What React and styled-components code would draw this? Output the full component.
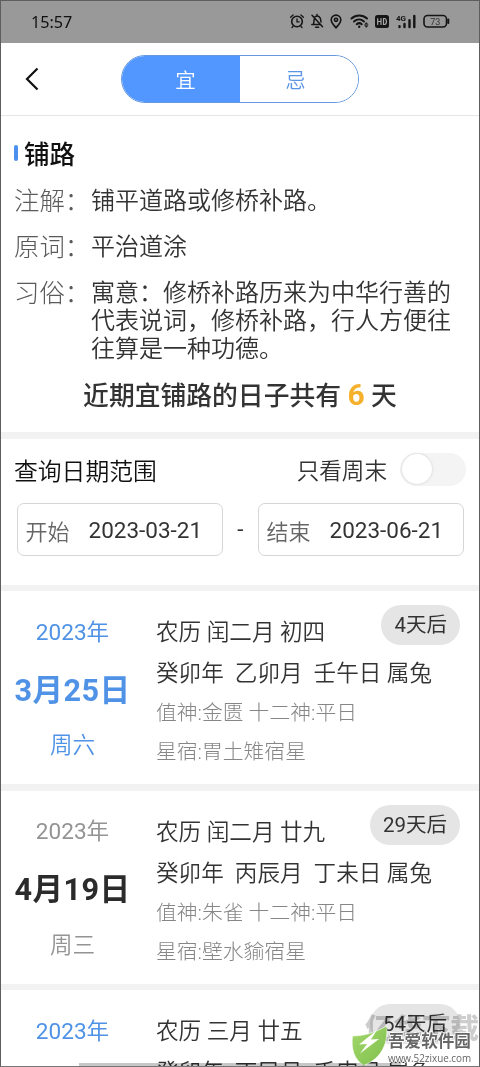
import React from 'react';
import styled, { createGlobalStyle } from 'styled-components';

const GlobalStyle = createGlobalStyle`
* { box-sizing: border-box; }
body {
    margin: 0;
    background: #fff;
    font-family: Roboto, "Noto Sans CJK SC", sans-serif;
    color: #333;
}
`;

const Phone = styled.div`
    position: relative;
    width: 480px;
    height: 1067px;
    overflow: hidden;
    border: 1px solid #5e5e5e;
    border-bottom-color: #777;
    background: #fff;
`;

const StatusBar = styled.div`
    display: flex;
    align-items: center;
    justify-content: space-between;
    height: 41.5px;
    padding: 0 28px 0 30px;
    background: #999;
    color: #111;
`;

const Clock = styled.span`
    font: 16.2px/38px "Noto Sans", sans-serif;
`;

const StatusIcons = styled.svg`
    width: 162px;
    height: 20px;
    display: block;
    margin-top: -1px;
`;

const NavBar = styled.div`
    display: grid;
    grid-template-columns: 120px 238px 1fr;
    align-items: center;
    height: 73px;
    border-bottom: 1px solid #e6e6e6;
`;

const BackIcon = styled.svg`
    width: 14px;
    height: 24px;
    margin-left: 24px;
`;

const Tabs = styled.div`
    display: grid;
    grid-template-columns: 118px 1fr;
    height: 48px;
    border: 1px solid #6598e0;
    border-radius: 24px;
    overflow: hidden;
`;

const Tab = styled.div`
    display: flex;
    align-items: center;
    justify-content: center;
    padding-right: ${p => (p.$active ? 0 : 7)}px;
    padding-left: ${p => (p.$active ? 9 : 0)}px;
    font-size: 20.5px;
    font-weight: 350;
    color: ${p => (p.$active ? '#fff' : '#5b94e6')};
    background: ${p => (p.$active ? '#5297ff' : '#fff')};
`;

const Intro = styled.section`
    height: 316.5px;
    padding: 22px 13px 0;
`;

const Title = styled.h1`
    display: flex;
    align-items: center;
    gap: 6px;
    margin: 0 0 15.5px;
    font-size: 25.6px;
    line-height: 34px;
    font-weight: 500;
    color: #111;
    &::before {
        content: "";
        width: 4px;
        height: 16px;
        margin-top: -4px;
        border-radius: 2px;
        background: #4a90ee;
    }
`;

const Entry = styled.div`
    display: grid;
    grid-template-columns: 77px 1fr;
    margin-bottom: 18px;
    font-size: 24px;
    line-height: 28px;
`;

const EntryLabel = styled.span`
    font-size: 25.4px;
    font-weight: 300;
    color: #5a5a5a;
    white-space: nowrap;
`;

const EntryText = styled.span`
    white-space: pre-line;
    font-weight: 350;
`;

const Summary = styled.div`
    margin-top: -4px;
    font-size: 25.8px;
    line-height: 36px;
    font-weight: 500;
    text-align: center;
    b {
        font-size: 30px;
        color: #f5b02c;
    }
`;

const Divider = styled.div`
    height: 6.5px;
    background: #f2f2f2;
`;

const Query = styled.section`
    height: 146px;
    padding: 12px 13px 0;
`;

const QueryHead = styled.div`
    display: flex;
    align-items: center;
    height: 38px;
    font-size: 23.8px;
    font-weight: 350;
    color: #111;
`;

const SwitchLabel = styled.span`
    margin-left: auto;
    margin-right: 13px;
    font-size: 22.6px;
    color: #333;
`;

const Switch = styled.span`
    width: 66px;
    height: 33px;
    padding: 1px 2px;
    border-radius: 17px;
    background: #f4f4f4;
`;

const Knob = styled.span`
    display: block;
    width: 30px;
    height: 30px;
    border-radius: 50%;
    background: #fff;
    box-shadow: 0 0 3px rgba(0, 0, 0, 0.16);
`;

const Range = styled.div`
    display: flex;
    align-items: center;
    justify-content: space-between;
    margin: 14px 2px 0 2.5px;
    font-size: 22.5px;
`;

const DateField = styled.div`
    display: flex;
    align-items: center;
    width: 206.5px;
    height: 53px;
    padding: 1px 0 0 8px;
    border: 1px solid #d6d6d6;
    border-radius: 7px;
    span {
        width: 63px;
        font-size: 22px;
        font-weight: 350;
        color: #666;
    }
`;

const Card = styled.article`
    display: grid;
    grid-template-columns: 155px 1fr;
    position: relative;
    height: 193px;
`;

const DayColumn = styled.div`
    width: 143px;
    padding-top: 23.5px;
    text-align: center;
    font-size: 22.6px;
    line-height: 36px;
    font-weight: 350;
    color: ${p => (p.$weekend ? '#5093e6' : '#949494')};
    strong {
        display: block;
        margin: 22px 0 19.5px;
        font-size: 30.6px;
        font-weight: 700;
        white-space: nowrap;
        letter-spacing: 0.4px;
        color: ${p => (p.$weekend ? '#5093e6' : '#2b2b2b')};
    }
`;

const Year = styled.span`
    font-weight: 400;
`;

const Detail = styled.div`
    padding-top: 21px;
    white-space: pre;
`;

const Lunar = styled.div`
    font-size: 22.6px;
    line-height: 41px;
    font-weight: 350;
`;

const Spirit = styled.div`
    font-size: 20.8px;
    line-height: 39px;
    font-weight: 300;
    color: #868686;
`;

const DaysLeft = styled.span`
    position: absolute;
    top: 14px;
    right: 19px;
    padding: 0 13px;
    border-radius: 20px;
    background: #e5e5e5;
    font-size: 20.5px;
    line-height: 40px;
`;

const HomeBar = styled.div`
    position: absolute;
    left: 78px;
    bottom: 0;
    width: 322px;
    height: 3px;
    background: #c9c6c6;
    mix-blend-mode: multiply;
`;

const Ghost = styled.div`
    position: absolute;
    left: 364px;
    bottom: 17px;
    font-size: 28.5px;
    line-height: 38px;
    font-weight: 900;
    white-space: nowrap;
    color: #cdcdcd;
    mix-blend-mode: multiply;
`;

const Mark = styled.div`
    position: absolute;
    left: 350px;
    bottom: 0;
    display: flex;
    align-items: flex-end;
    svg { width: 38px; height: 43px; }
`;

const MarkText = styled.div`
    width: 90px;
    margin-left: -1px;
    font-size: 16.6px;
    line-height: 18px;
    font-weight: 700;
    color: #666;
    -webkit-text-stroke: 1.5px #fff;
    paint-order: stroke fill;
    white-space: nowrap;
    small {
        display: block;
        font: 400 9.9px/14px "Open Sans", sans-serif;
        padding-bottom: 1px;
    }
`;

const days = [
    { year: '2023年', day: '3月25日', week: '周六', weekend: true, left: '4天后', lunar: '农历 闰二月 初四', ganzhi: '癸卯年  乙卯月  壬午日 属兔', god: '值神:金匮 十二神:平日', star: '星宿:胃土雉宿星' },
    { year: '2023年', day: '4月19日', week: '周三', weekend: false, left: '29天后', lunar: '农历 闰二月 廿九', ganzhi: '癸卯年  丙辰月  丁未日 属兔', god: '值神:朱雀 十二神:平日', star: '星宿:壁水貐宿星' },
    { year: '2023年', day: '', week: '', weekend: true, left: '54天后', lunar: '农历 三月 廿五', ganzhi: '癸卯年  丁巳月  壬申日 属兔', god: '', star: '' },
];

const entries = [
    ['注解：', '铺平道路或修桥补路。'],
    ['原词：', '平治道涂'],
    ['习俗：', '寓意：修桥补路历来为中华行善的\n代表说词，修桥补路，行人方便往\n往算是一种功德。'],
];

function StatusGlyphs() {
    return (
        <StatusIcons viewBox="0 0 162 20" fill="none" stroke="#151515" strokeWidth="1.6" strokeLinecap="round">
            {/* alarm */}
            <circle cx="8" cy="10.5" r="5.3" />
            <path d="M8 7.8v3h2.2M1.6 6.2l2.5-2.3M14.4 6.2l-2.5-2.3M4 15.5l-1 1M12 15.5l1 1" strokeWidth="1.3" />
            {/* muted bell */}
            <path d="M24.2 13.3c1.1-1.6.5-3.7 1.1-5.3M26.2 5.7c3-1.8 5.4.4 5.5 3.3l.3 2M22.8 13.6h9M26.6 16.2h3M23 4.2l10.5 11.5M28 4V3.5" strokeWidth="1.5" />
            {/* location */}
            <path d="M47 16.8c-3-3.4-4.8-5.4-4.8-7.9a4.8 4.8 0 0 1 9.6 0c0 2.5-1.8 4.500-4.8 7.900z" />
            <circle cx="47" cy="8.8" r="1.6" />
            {/* wifi */}
            <path d="M62.5 7.5c4.5-4 11-4 15.5 0M65 10.5c3-2.7 7-2.7 10 0M67.7 13.2c1.7-1.4 3.5-1.4 5 0" strokeWidth="2" />
            <circle cx="70.2" cy="15.7" r="1.2" fill="#151515" stroke="none" />
            <path d="M75.8 13.2l1.5-1.7 1.5 1.7zM75.8 14.8l1.5 1.7 1.5-1.7z" fill="#151515" strokeWidth="0.5" />
            {/* hd */}
            <rect x="86" y="4" width="14" height="13" rx="2.5" fill="#151515" stroke="none" />
            <path d="M88.7 7.5v6M92 7.5v6M88.7 10.5H92M94.5 7.5v6h1c2.5 0 2.5-6 0-6z" stroke="#aaa" strokeWidth="1.2" />
            {/* signal */}
            <text x="107" y="9.8" fontSize="8" fontWeight="700" fill="#151515" stroke="none">4G</text>
            <path d="M110.5 15.3v.7M115.5 13V16M120.5 9.3V16M125.3 5V16" strokeWidth="2.4" />
            <rect x="135" y="4.5" width="22.5" height="11.5" rx="3.5" />
            <path d="M159.3 8.5v3.5" strokeWidth="2" />
            <text x="146.2" y="13.5" fontSize="9" textAnchor="middle" fill="#333" stroke="none">73</text>
        </StatusIcons>
    );
}

function DayCard({ data }) {
    return (
        <Card>
            <DayColumn $weekend={data.weekend}>
                <Year>{data.year}</Year>
                <strong>{data.day}</strong>
                {data.week}
            </DayColumn>
            <Detail>
                <Lunar>{data.lunar}</Lunar>
                <Lunar>{data.ganzhi}</Lunar>
                <Spirit>{data.god}</Spirit>
                <Spirit>{data.star}</Spirit>
            </Detail>
            <DaysLeft>{data.left}</DaysLeft>
        </Card>
    );
}

function App() {
    return (
        <Phone>
            <GlobalStyle />
            <StatusBar>
                <Clock>15:57</Clock>
                <StatusGlyphs />
            </StatusBar>
            <NavBar>
                <BackIcon viewBox="0 0 14 24" fill="none" stroke="#111" strokeWidth="2.2">
                    <path d="M12.5 1.5L2 12l10.5 10.5" />
                </BackIcon>
                <Tabs>
                    <Tab $active>宜</Tab>
                    <Tab>忌</Tab>
                </Tabs>
            </NavBar>
            <Intro>
                <Title>铺路</Title>
                {entries.map(([label, text]) => (
                    <Entry key={label}>
                        <EntryLabel>{label}</EntryLabel>
                        <EntryText>{text}</EntryText>
                    </Entry>
                ))}
                <Summary>近期宜铺路的日子共有 <b>6</b> 天</Summary>
            </Intro>
            <Divider />
            <Query>
                <QueryHead>
                    查询日期范围
                    <SwitchLabel>只看周末</SwitchLabel>
                    <Switch><Knob /></Switch>
                </QueryHead>
                <Range>
                    <DateField><span>开始</span>2023-03-21</DateField>
                    -
                    <DateField><span>结束</span>2023-06-21</DateField>
                </Range>
            </Query>
            {days.map(d => (
                <React.Fragment key={d.left}>
                    <Divider />
                    <DayCard data={d} />
                </React.Fragment>
            ))}
            <HomeBar />
            <Ghost>亿华下载</Ghost>
            <Mark>
                <svg viewBox="0 0 38 43">
                    <defs>
                        <linearGradient id="leaf" x1="0" y1="0" x2="1" y2="1">
                            <stop offset="0" stopColor="#a3d86c" />
                            <stop offset="1" stopColor="#7fc04c" />
                        </linearGradient>
                    </defs>
                    <path d="M1.5 13C14 13 25 9 35.5 3c2 14-3 32-23 39.5C3 36 0 26 1.5 13z" fill="url(#leaf)" stroke="#fff" strokeWidth="0.6" />
                    <path d="M26 7L8 21.5l8-.5-7 9.5L28 16l-8 .5z" fill="#fff" />
                </svg>
                <MarkText>吾爱软件园<small>www.52zixue.com</small></MarkText>
            </Mark>
        </Phone>
    );
}

export default App;
